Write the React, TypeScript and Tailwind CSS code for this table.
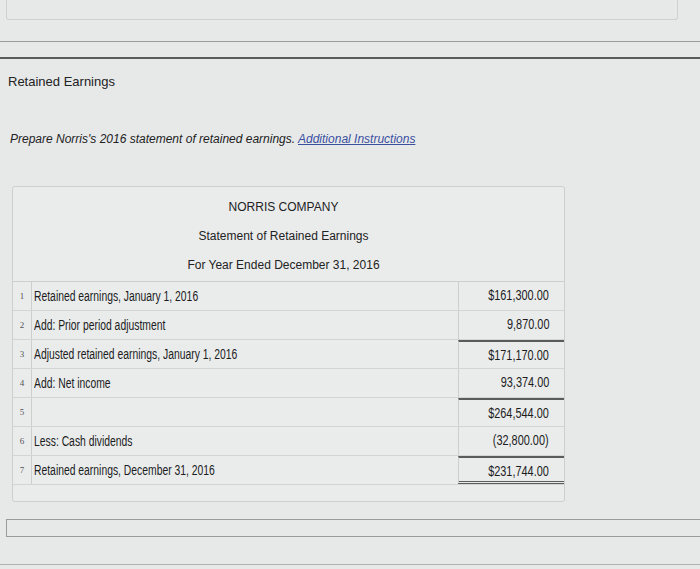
import React from "react";

type Row = {
  n: number;
  label: string;
  amount: string;
  thickTop?: boolean;
  doubleBottom?: boolean;
};

const rows: Row[] = [
  { n: 1, label: "Retained earnings, January 1, 2016", amount: "$161,300.00" },
  { n: 2, label: "Add: Prior period adjustment", amount: "9,870.00" },
  { n: 3, label: "Adjusted retained earnings, January 1, 2016", amount: "$171,170.00", thickTop: true },
  { n: 4, label: "Add: Net income", amount: "93,374.00" },
  { n: 5, label: "", amount: "$264,544.00", thickTop: true },
  { n: 6, label: "Less: Cash dividends", amount: "(32,800.00)" },
  { n: 7, label: "Retained earnings, December 31, 2016", amount: "$231,744.00", thickTop: true, doubleBottom: true },
];

// narrow, calibri-like cell text
const cellText = "inline-block whitespace-nowrap text-[14px] text-[#1c1c1c]";

export default function App() {
  return (
    <div className="w-[700px] h-[569px] overflow-hidden bg-[#e7e9e9] font-['Liberation_Sans',Arial,sans-serif] text-[#222]">
      {/* top panel edge */}
      <div className="ml-[6px] w-[672px] h-[20px] border border-t-0 border-[#cfd1d1] rounded-b-[3px]" />
      <div className="mt-[21px] h-px bg-[#9a9c9c]" />
      <div className="mt-[15px] h-[2px] bg-[#5a5c5c]" />

      <div className="pl-[8px] pt-[14px] text-[13px] leading-[18px]">Retained Earnings</div>

      <div className="pl-[10px] pt-[40px] text-[12px] leading-[16px] italic">
        Prepare Norris's 2016 statement of retained earnings.{" "}
        <span className="text-[#3a4fa0] underline">Additional Instructions</span>
      </div>

      {/* statement */}
      <div className="ml-[12px] mt-[39px] w-[553px] border border-[#cdcfcf] rounded-[3px] bg-[#eaecec]">
        <div className="pt-[6px] pb-[1px] pr-[10px] text-center text-[12px]">
          <div className="h-[29px] leading-[29px]">NORRIS COMPANY</div>
          <div className="h-[29px] leading-[29px]">Statement of Retained Earnings</div>
          <div className="h-[29px] leading-[29px]">For Year Ended December 31, 2016</div>
        </div>

        <div className="border-t border-[#cdcfcf]">
          {rows.map((r) => (
            <div key={r.n} className="flex h-[29px] border-b border-[#d3d5d5]">
              <div className="w-[19px] shrink-0 border-r border-[#cdcfcf] text-center font-['Liberation_Serif',serif] text-[9px] leading-[28px] text-[#555]">
                {r.n}
              </div>
              <div className="flex-1 pl-[2px] leading-[28px]">
                <span className={`${cellText} origin-left scale-x-[0.74]`}>{r.label}</span>
              </div>
              <div
                className={`w-[106px] shrink-0 border-l border-[#cdcfcf] pr-[15px] text-right leading-[26px] ${
                  r.thickTop ? "border-t-2 border-t-[#5a5c5c]" : ""
                } ${r.doubleBottom ? "border-b-[3px] border-double border-b-[#5a5c5c]" : ""}`}
              >
                <span className={`${cellText} origin-right scale-x-[0.78]`}>{r.amount}</span>
              </div>
            </div>
          ))}
          <div className="h-[16px]" />
        </div>
      </div>

      {/* bottom panel */}
      <div className="mt-[17px] ml-[6px] h-[18px] border-t border-l border-b border-[#9a9c9c]" />
      <div className="mt-[27px] h-px bg-[#b0b2b2]" />
    </div>
  );
}
